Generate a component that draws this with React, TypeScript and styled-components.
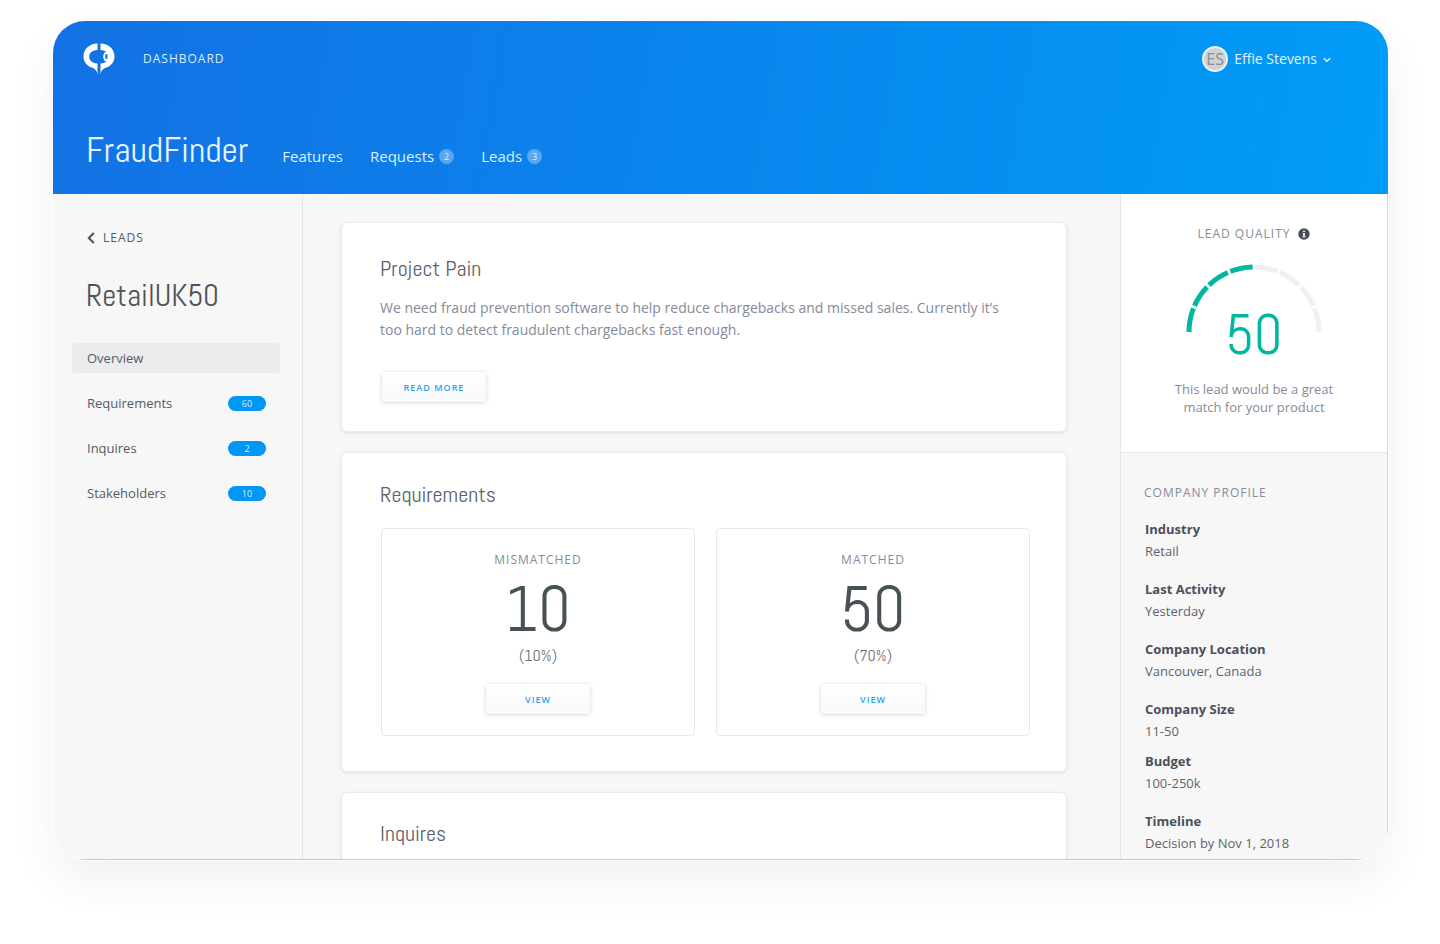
import React from "react";
import styled, { createGlobalStyle, css } from "styled-components";

const sans = `"Open Sans", "Noto Sans", sans-serif`;
const display = `"Abel", "Liberation Sans Narrow", "Roboto Condensed", "Liberation Sans", sans-serif`;

const Global = createGlobalStyle`
  *, *::before, *::after { box-sizing: border-box; }
  body { margin: 0; background: #fff; font-family: ${sans}; font-size: 13px; color: #555b66; }
  h1, h2, h3, p, ul, dl, dd { margin: 0; padding: 0; }
  ul { list-style: none; }
  a { color: inherit; text-decoration: none; }
  button { font: inherit; border: 0; cursor: pointer; }
`;

const Page = styled.div`
  display: flex;
  flex-direction: column;
  min-height: 100vh;
  padding: 21px 52px 84px 53px;
`;

const Frame = styled.div`
  display: flex;
  flex-direction: column;
  flex: 1;
  overflow: hidden;
  border-radius: 32px;
  background: #f7f7f7;
  box-shadow: 0 0 0 1px #fff, 0 20px 44px rgba(40, 60, 100, 0.07);
`;

const Header = styled.header`
  padding: 22px 57px 24px 30px;
  color: #fff;
  background: linear-gradient(100deg, #1371e4 0%, #0a83ec 45%, #009df7 100%);
`;

const TopBar = styled.div`
  display: flex;
  align-items: center;
  justify-content: space-between;
  height: 32px;
`;

const Brand = styled.a`
  display: flex;
  align-items: center;
  gap: 28px;
  font-size: 12px;
  line-height: 20px;
  letter-spacing: 1px;
  color: #dcecff;
`;

const UserButton = styled.button`
  display: flex;
  align-items: center;
  gap: 6px;
  padding: 0;
  background: none;
  color: #e4f4ff;
  font-size: 14px;
  line-height: 20px;
`;

const Avatar = styled.span`
  display: flex;
  align-items: center;
  justify-content: center;
  width: 26px;
  height: 26px;
  border: 2px solid #e6f4fd;
  border-radius: 50%;
  background: #d0d2d4;
  color: #8b8b8b;
  font-size: 16px;
`;

const ProductBar = styled.div`
  display: flex;
  align-items: baseline;
  gap: 34px;
  margin-top: 55px;
  padding-left: 3px;
`;

const ProductName = styled.h1`
  font: 400 36px/40px ${display};
  color: #e9f4ff;
`;

const Nav = styled.nav`
  display: flex;
  gap: 27px;
`;

const NavLink = styled.a`
  display: flex;
  align-items: center;
  gap: 5px;
  font-size: 15px;
  line-height: 20px;
  color: #dff0ff;
`;

const NavCount = styled.span`
  width: 15px;
  height: 15px;
  border-radius: 50%;
  background: rgba(255, 255, 255, 0.32);
  font-size: 9px;
  line-height: 15px;
  text-align: center;
`;

const Body = styled.div`
  display: grid;
  grid-template-columns: 250px minmax(0, 1fr) 267px;
  flex: 1;
  border-right: 1px solid #d5d7da;
  border-bottom: 1px solid #c6c9ce;
`;

const Sidebar = styled.aside`
  padding: 34px 22px 20px 19px;
  border-right: 1px solid #e6e7ec;
`;

const BackLink = styled.a`
  display: flex;
  align-items: center;
  gap: 8px;
  padding-left: 15px;
  font-size: 12px;
  line-height: 20px;
  letter-spacing: 1px;
`;

const LeadName = styled.h2`
  margin: 30px 0 29px 14px;
  font: 400 31px/36px ${display};
  color: #4d5458;
`;

const Menu = styled.ul`
  display: grid;
  gap: 15px;
`;

const MenuLink = styled.a<{ $active?: boolean }>`
  display: flex;
  align-items: center;
  justify-content: space-between;
  height: 30px;
  padding: 0 14px 0 15px;
  border-radius: 2px;
  background: ${(p) => (p.$active ? "#ebecee" : "transparent")};
`;

const MenuCount = styled.span`
  width: 38px;
  border-radius: 8px;
  background: #0097f5;
  color: #d8f0ff;
  font-size: 9px;
  line-height: 15px;
  text-align: center;
`;

const Main = styled.main`
  display: flex;
  flex-direction: column;
  gap: 22px;
  padding: 29px 54px 0 39px;
  overflow: hidden;
`;

const Card = styled.section<{ $pad: string; $cut?: boolean }>`
  padding: ${(p) => p.$pad};
  border-radius: 5px;
  background: #fff;
  box-shadow: 0 0 0 1px #ececf0, 0 1px 3px 1px rgba(60, 70, 100, 0.14);
  ${(p) =>
    p.$cut &&
    css`
      flex: 1;
      border-radius: 5px 5px 0 0;
    `}
`;

const CardTitle = styled.h3`
  font: 400 22px/28px ${display};
  color: #5c616b;
`;

const Lead = styled.p`
  max-width: 640px;
  margin: 15px 0 31px;
  font-size: 14px;
  line-height: 22px;
  color: #858b98;
`;

const Actions = styled.div`
  display: flex;
  padding-left: 2px;
`;

const PillButton = styled.button`
  width: 104px;
  height: 30px;
  border-radius: 3px;
  background: linear-gradient(#fff, #f8f9fb);
  box-shadow: 0 0 0 1px rgba(60, 70, 100, 0.04), 0 1px 4px rgba(60, 70, 100, 0.18);
  color: #2aa3ee;
  font-size: 9px;
  font-weight: 600;
  letter-spacing: 1px;
`;

const Tiles = styled.div`
  display: grid;
  grid-template-columns: 1fr 1fr;
  gap: 21px;
  margin-top: 20px;
  padding-left: 1px;
`;

const Tile = styled.div`
  display: flex;
  flex-direction: column;
  align-items: center;
  padding: 21px 20px;
  border: 1px solid #e8e9eb;
  border-radius: 4px;
`;

const Caption = styled.div`
  font-size: 12px;
  line-height: 20px;
  letter-spacing: 1px;
  color: #868c99;
`;

const BigNumber = styled.div`
  margin: 7px 0 5px;
  font: 400 64px/64px ${display};
  color: #485155;
`;

const Percent = styled.div`
  margin-bottom: 18px;
  font: 400 16px/20px ${display};
  color: #6a6f73;
`;

const Aside = styled.aside`
  border-left: 1px solid #e4e5e8;
`;

const Quality = styled.section`
  display: flex;
  flex-direction: column;
  align-items: center;
  padding: 30px 20px 36px;
  border-bottom: 1px solid #e6e7ea;
  background: #fff;
  text-align: center;
`;

const QualityHead = styled.div`
  display: flex;
  align-items: center;
  gap: 8px;
`;

const Gauge = styled.div`
  display: flex;
  flex-direction: column;
  align-items: center;
  margin-top: 20px;
`;

const Score = styled.div`
  margin-top: -25px;
  font: 400 56px/56px ${display};
  color: #00b8a0;
`;

const Verdict = styled.p`
  margin-top: 17px;
  max-width: 170px;
  line-height: 18px;
  color: #858b98;
`;

const Profile = styled.section`
  padding: 30px 24px 4px 23px;
`;

const Facts = styled.dl`
  margin-top: 15px;
  padding-left: 1px;
  line-height: 22px;
`;

const Fact = styled.div<{ $tight?: boolean }>`
  margin-bottom: ${(p) => (p.$tight ? 8 : 16)}px;
  &:last-child { margin-bottom: 0; }
  dt { font-weight: 700; color: #4a505c; }
  dd { color: #5d6469; }
`;

const Logo = () => (
  <svg width="32" height="32" viewBox="0 0 32 32" fill="#fff" aria-hidden="true">
    <path d="M14.500 0.400C6.500 0.600 0.500 5.800 0.500 13.200c0 5.600 3.400 9.800 8.400 11.400 3 1 5 3.200 5.600 6.800V20.400C9.500 20.200 6.200 17.800 6.200 13.700S9.500 7.200 14.500 7z" />
    <path d="M17.500 0.400C25.500 0.600 31.500 5.800 31.500 13.200c0 5.600-3.400 9.800-8.400 11.400-3 1-5 3.200-5.600 6.800V20.400c5-.2 8.300-2.600 8.300-6.700S22.500 7.200 17.500 7z" />
    <ellipse cx="24.200" cy="13.500" rx="4" ry="5.200" />
    <ellipse cx="23.400" cy="13.500" rx="1.200" ry="2.700" fill="#1473e5" />
  </svg>
);

const SEGMENTS = 8;
const gaugePath = (i: number) => {
  const r = 65;
  const step = 180 / SEGMENTS;
  const from = ((180 + i * step + (i ? 1.2 : 0)) * Math.PI) / 180;
  const to = ((180 + (i + 1) * step - (i < SEGMENTS - 1 ? 1.2 : 0)) * Math.PI) / 180;
  const p = (a: number) => `${68 + r * Math.cos(a)} ${68 + r * Math.sin(a)}`;
  return `M${p(from)}A${r} ${r} 0 0 1 ${p(to)}`;
};

const facts = [
  { label: "Industry", value: "Retail" },
  { label: "Last Activity", value: "Yesterday" },
  { label: "Company Location", value: "Vancouver, Canada" },
  { label: "Company Size", value: "11-50", tight: true },
  { label: "Budget", value: "100-250k" },
  { label: "Timeline", value: "Decision by Nov 1, 2018" },
];

const menu = [
  { label: "Overview", active: true },
  { label: "Requirements", count: 60 },
  { label: "Inquires", count: 2 },
  { label: "Stakeholders", count: 10 },
];

const nav = [
  { label: "Features" },
  { label: "Requests", count: 2 },
  { label: "Leads", count: 3 },
];

const tiles = [
  { label: "MISMATCHED", value: 10, percent: "(10%)" },
  { label: "MATCHED", value: 50, percent: "(70%)" },
];

export default function App() {
  return (
    <Page>
      <Global />
      <Frame>
        <Header>
          <TopBar>
            <Brand href="#dashboard">
              <Logo />
              DASHBOARD
            </Brand>
            <UserButton type="button">
              <Avatar>ES</Avatar>
              Effie Stevens
              <svg width="8" height="8" viewBox="0 0 8 8" fill="none" stroke="currentColor" strokeWidth="1.400" aria-hidden="true">
                <path d="M0.800 3.200L4 6.200l3.200-3" />
              </svg>
            </UserButton>
          </TopBar>
          <ProductBar>
            <ProductName>FraudFinder</ProductName>
            <Nav>
              {nav.map((n) => (
                <NavLink key={n.label} href={`#${n.label.toLowerCase()}`}>
                  {n.label}
                  {n.count && <NavCount>{n.count}</NavCount>}
                </NavLink>
              ))}
            </Nav>
          </ProductBar>
        </Header>
        <Body>
          <Sidebar>
            <BackLink href="#leads">
              <svg width="8" height="12" viewBox="0 0 8 12" fill="none" stroke="#4a505c" strokeWidth="2" aria-hidden="true">
                <path d="M6.800 1L1.800 6l5 5" />
              </svg>
              LEADS
            </BackLink>
            <LeadName>RetailUK50</LeadName>
            <Menu>
              {menu.map((m) => (
                <li key={m.label}>
                  <MenuLink href={`#${m.label.toLowerCase()}`} $active={m.active}>
                    {m.label}
                    {m.count && <MenuCount>{m.count}</MenuCount>}
                  </MenuLink>
                </li>
              ))}
            </Menu>
          </Sidebar>
          <Main>
            <Card $pad="31px 36px 29px 38px">
              <CardTitle>Project Pain</CardTitle>
              <Lead>
                We need fraud prevention software to help reduce chargebacks and missed sales. Currently it’s too hard
                to detect fraudulent chargebacks fast enough.
              </Lead>
              <Actions>
                <PillButton type="button">READ MORE</PillButton>
              </Actions>
            </Card>
            <Card $pad="27px 36px 35px 38px">
              <CardTitle>Requirements</CardTitle>
              <Tiles>
                {tiles.map((t) => (
                  <Tile key={t.label}>
                    <Caption>{t.label}</Caption>
                    <BigNumber>{t.value}</BigNumber>
                    <Percent>{t.percent}</Percent>
                    <PillButton type="button">VIEW</PillButton>
                  </Tile>
                ))}
              </Tiles>
            </Card>
            <Card $pad="26px 36px 10px 38px" $cut>
              <CardTitle>Inquires</CardTitle>
            </Card>
          </Main>
          <Aside>
            <Quality>
              <QualityHead>
                <Caption>LEAD QUALITY</Caption>
                <svg width="12" height="12" viewBox="0 0 12 12" aria-hidden="true">
                  <circle cx="6" cy="6" r="5.700" fill="#454b57" />
                  <path d="M5 2.500h2v1.600H5zM4.600 5H7v3.400h.6v1H4.400v-1H5V6h-.4z" fill="#dfe1e4" />
                </svg>
              </QualityHead>
              <Gauge>
                <svg width="136" height="68" viewBox="0 0 136 68" fill="none" strokeWidth="5" aria-hidden="true">
                  {Array.from({ length: SEGMENTS }, (_, i) => (
                    <path key={i} d={gaugePath(i)} stroke={i < 4 ? "#00b8a0" : "#f0f0f1"} />
                  ))}
                </svg>
                <Score>50</Score>
              </Gauge>
              <Verdict>This lead would be a great match for your product</Verdict>
            </Quality>
            <Profile>
              <Caption>COMPANY PROFILE</Caption>
              <Facts>
                {facts.map((f) => (
                  <Fact key={f.label} $tight={f.tight}>
                    <dt>{f.label}</dt>
                    <dd>{f.value}</dd>
                  </Fact>
                ))}
              </Facts>
            </Profile>
          </Aside>
        </Body>
      </Frame>
    </Page>
  );
}
